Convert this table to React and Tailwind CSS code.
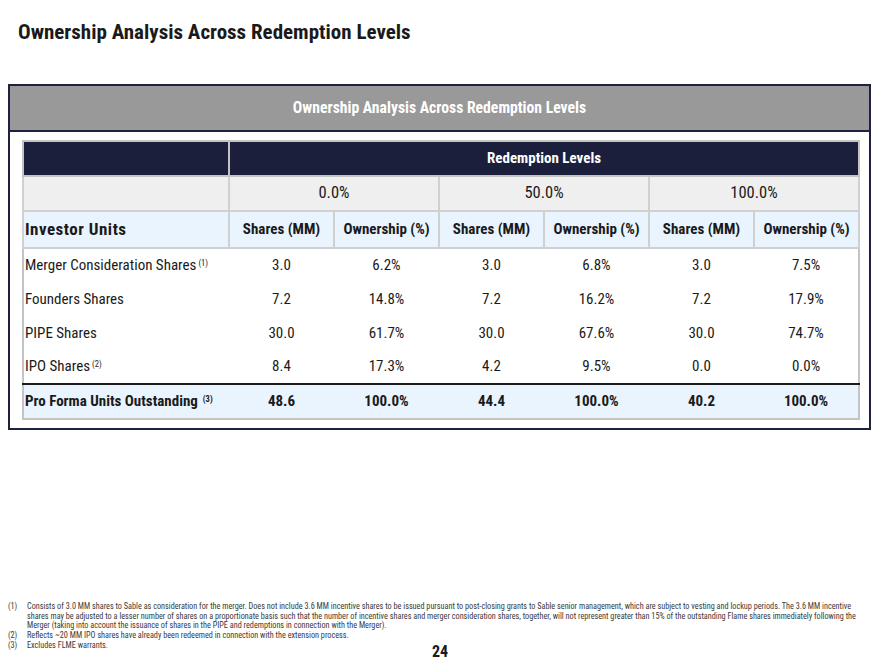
import React from "react";

const rows = [
  { name: "Merger Consideration Shares", sup: "(1)", v: ["3.0", "6.2%", "3.0", "6.8%", "3.0", "7.5%"] },
  { name: "Founders Shares", v: ["7.2", "14.8%", "7.2", "16.2%", "7.2", "17.9%"] },
  { name: "PIPE Shares", v: ["30.0", "61.7%", "30.0", "67.6%", "30.0", "74.7%"] },
  { name: "IPO Shares", sup: "(2)", v: ["8.4", "17.3%", "4.2", "9.5%", "0.0", "0.0%"] },
];

const heads = ["Shares (MM)", "Ownership (%)", "Shares (MM)", "Ownership (%)", "Shares (MM)", "Ownership (%)"];
const totals = ["48.6", "100.0%", "44.4", "100.0%", "40.2", "100.0%"];

export default function App() {
  return (
    <div className="w-[880px] h-[660px] bg-white relative text-[#1a1a1a] font-['Roboto_Condensed','Open_Sans_Condensed',sans-serif]">
      <div className="pl-[18px] pt-[19px] h-[84px] text-[21px] font-bold leading-[26px]">
        Ownership Analysis Across Redemption Levels
      </div>
      <div className="ml-[8px] w-[863px] border-2 border-[#1e2140]">
        <div className="h-[46px] bg-[#999999] border-b-2 border-[#1e2140] flex items-center justify-center text-white font-bold text-[15.7px]">
          Ownership Analysis Across Redemption Levels
        </div>
        <div className="pl-[12px] pt-[8px] pb-[8px]">
          <table className="table-fixed border-collapse w-[836px] border-2 border-[#c4c4c4]">
            <colgroup>
              <col className="w-[206px]" />
              <col className="w-[105px]" />
              <col className="w-[105px]" />
              <col className="w-[105px]" />
              <col className="w-[105px]" />
              <col className="w-[105px]" />
              <col className="w-[105px]" />
            </colgroup>
            <tbody>
              <tr className="h-[35px] bg-[#1c1f3c] text-white font-bold text-[15px]">
                <td className="border-2 border-[#c4c4c4]"></td>
                <td colSpan={6} className="border-2 border-[#c4c4c4] text-center">Redemption Levels</td>
              </tr>
              <tr className="h-[35px] bg-[#efefef] text-[16.5px]">
                <td className="border-2 border-[#d0d0d0]"></td>
                <td colSpan={2} className="border-2 border-[#d0d0d0] text-center">0.0%</td>
                <td colSpan={2} className="border-2 border-[#d0d0d0] text-center">50.0%</td>
                <td colSpan={2} className="border-2 border-[#d0d0d0] text-center">100.0%</td>
              </tr>
              <tr className="h-[37px] bg-[#e9f4fe] font-bold text-[15px]">
                <td className="border-2 border-[#d0d0d0] pl-[1px] text-[17px] tracking-[0.5px]">Investor Units</td>
                {heads.map((h, i) => (
                  <td key={i} className="border-2 border-[#d0d0d0] text-center whitespace-nowrap">{h}</td>
                ))}
              </tr>
              {rows.map((r, i) => (
                <tr key={i} className="h-[34px] bg-white text-[15px]">
                  <td className="pl-[1px] whitespace-nowrap">
                    {r.name}
                    {r.sup && <sup className="text-[8.5px] ml-[2px] relative -top-[4px]">{r.sup}</sup>}
                  </td>
                  {r.v.map((x, j) => (
                    <td key={j} className="text-center">{x}</td>
                  ))}
                </tr>
              ))}
              <tr className="h-[35px] bg-[#e9f4fe] font-bold text-[15px] border-t-2 border-[#1a1a1a]">
                <td className="pl-[1px] whitespace-nowrap">
                  Pro Forma Units Outstanding
                  <sup className="text-[8.5px] ml-[5px] relative -top-[4px]">(3)</sup>
                </td>
                {totals.map((x, j) => (
                  <td key={j} className="text-center">{x}</td>
                ))}
              </tr>
            </tbody>
          </table>
        </div>
      </div>
      <div className="absolute left-[8px] top-[602px] w-[860px] text-[8.2px] leading-[9.7px] text-[#3a3a3a] whitespace-nowrap">
        <div className="flex">
          <span className="w-[19px] shrink-0">(1)</span>
          <div className="flex flex-col">
            <span>Consists of 3.0 MM shares to Sable as consideration for the merger. Does not include 3.6 MM incentive shares to be issued pursuant to post-closing grants to Sable senior management, which are subject to vesting and lockup periods. The 3.6 MM incentive</span>
            <span>shares may be adjusted to a lesser number of shares on a proportionate basis such that the number of incentive shares and merger consideration shares, together, will not represent greater than 15% of the outstanding Flame shares immediately following the</span>
            <span>Merger (taking into account the issuance of shares in the PIPE and redemptions in connection with the Merger).</span>
          </div>
        </div>
        <div className="flex">
          <span className="w-[19px] shrink-0">(2)</span>
          <span>Reflects ~20 MM IPO shares have already been redeemed in connection with the extension process.</span>
        </div>
        <div className="flex">
          <span className="w-[19px] shrink-0">(3)</span>
          <span>Excludes FLME warrants.</span>
        </div>
      </div>
      <div className="absolute left-[432px] top-[643px] text-[16px] font-bold leading-[18px]">24</div>
    </div>
  );
}
